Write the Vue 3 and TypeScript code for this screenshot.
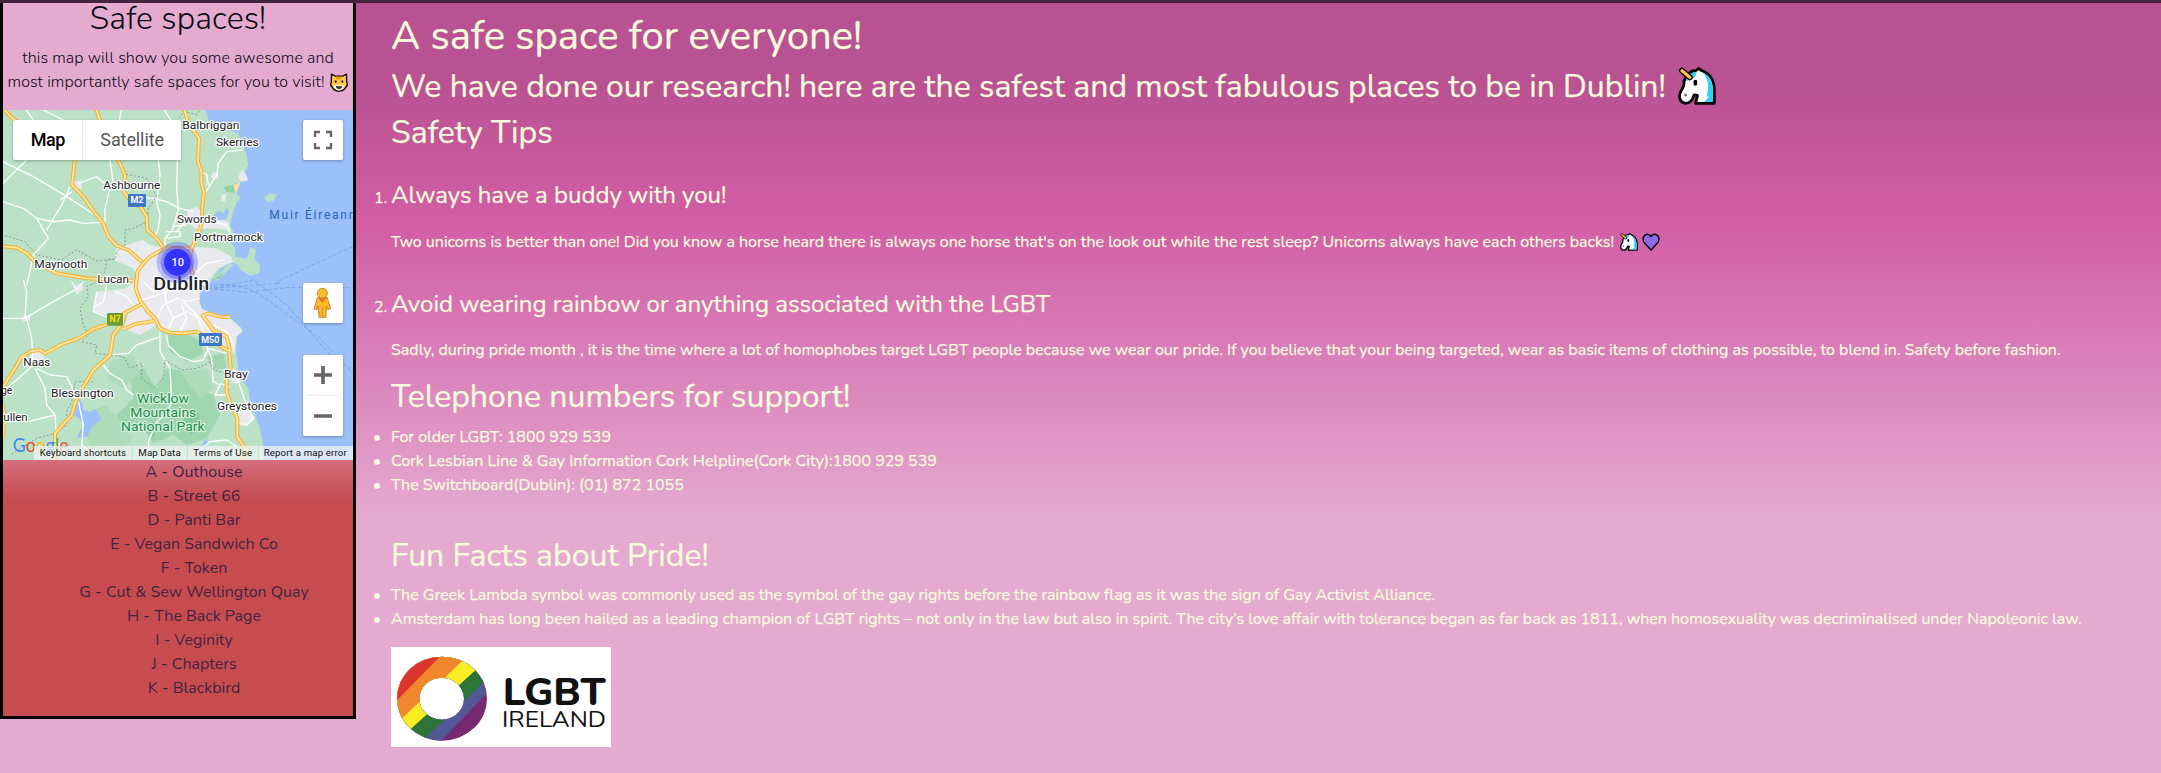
<script setup lang="ts">
interface Label { text: string; x: number; y: number; w: number }

const places: string[] = [
  'A - Outhouse',
  'B - Street 66',
  'D - Panti Bar',
  'E - Vegan Sandwich Co',
  'F - Token',
  'G - Cut & Sew Wellington Quay',
  'H - The Back Page',
  'I - Veginity',
  'J - Chapters',
  'K - Blackbird',
]

const phones: string[] = [
  'For older LGBT: 1800 929 539',
  'Cork Lesbian Line & Gay Information Cork Helpline(Cork City):1800 929 539',
  'The Switchboard(Dublin): (01) 872 1055',
]

const facts: string[] = [
  'The Greek Lambda symbol was commonly used as the symbol of the gay rights before the rainbow flag as it was the sign of Gay Activist Alliance.',
  'Amsterdam has long been hailed as a leading champion of LGBT rights – not only in the law but also in spirit. The city’s love affair with tolerance began as far back as 1811, when homosexuality was decriminalised under Napoleonic law.',
]

const towns: Label[] = [
  { text: 'Balbriggan', x: 547, y: 72, w: 171 },
  { text: 'Skerries', x: 648, y: 123, w: 128 },
  { text: 'Ashbourne', x: 310, y: 252, w: 171 },
  { text: 'Swords', x: 531, y: 354, w: 119 },
  { text: 'Portmarnock', x: 582, y: 408, w: 206 },
  { text: 'Maynooth', x: 103, y: 489, w: 159 },
  { text: 'Lucan', x: 292, y: 535, w: 95 },
  { text: 'Naas', x: 70, y: 783, w: 81 },
  { text: 'Bray', x: 672, y: 820, w: 71 },
  { text: 'Blessington', x: 153, y: 877, w: 188 },
  { text: 'Greystones', x: 651, y: 916, w: 180 },
  { text: 'ge', x: 3, y: 868, w: 34 },
  { text: 'ullen', x: 10, y: 949, w: 73 },
]

const motorways: string[] = [
  'M10 10 C30 38 50 50 62 57 L104 60 L150 60',
  'M288 10 L305 60 L355 165 L375 210 L372 262 L395 290 L425 310 L440 335 L442 375 L470 400 L492 430',
  'M228 60 L224 165 L216 240 L250 275 L285 325 L310 355 L325 395 L350 422 L385 435 L425 470',
  'M552 10 L565 55 L597 100 L594 170 L604 200 L604 235 L612 262 L606 310 L606 350 L596 385 L575 430',
  'M9 424 L50 428 L80 445 L110 475 L170 505 L260 520 L400 527',
  'M575 430 L495 430 L450 455 L430 475 L412 500 L407 550 L420 585 L440 615 L465 640 L480 670 L510 683 L550 685 L590 680 L630 700 L660 723 L688 738 L692 790 L680 825 L680 860 L690 895 L712 940 L712 995 L732 1025 L735 1065',
  'M575 430 L568 465 L578 510',
  'M9 845 L45 790 L65 755 L95 738 L120 735 L135 745 L185 718 L235 700 L280 672 L330 655 L370 650 L372 625 L425 597',
  'M9 900 L12 940 L9 1000',
  'M370 650 L340 690 L330 750 L280 795 L250 845 L225 895 L215 930 L165 985 L165 1065',
  'M370 672 L410 656 L462 648',
  'M690 737 L680 695 L640 675 L608 632 L625 625 L660 635 L690 636',
]

const minorRoads: string[] = [
  'M9 235 L80 165 M9 170 L100 215 L185 265 L285 330 M9 290 L70 310 L110 340 L145 400 L100 450 L90 500 L80 540 M110 340 L160 350 L210 345 L250 355 L310 352 M140 375 L185 300 L210 245',
  'M216 260 L180 285 M235 235 L290 215 L330 250 L315 310 L315 355 M330 165 L340 240 M475 165 L480 210 L470 290 L480 330 L475 370 L465 395 M535 60 L530 250 L535 310 L520 370 L495 400 L495 430',
  'M410 275 L460 280 L500 290 L540 310 L580 320 M500 380 L540 380 L540 395 L500 400 M515 365 L560 360 M615 265 L640 225 L650 210 L655 175 L680 140 L725 135 M600 195 L620 210 L625 240 M530 380 L560 345 L600 340 L680 360 L690 385',
  'M75 10 L100 45 M130 15 L190 45 M365 10 L355 60 M490 10 L515 50 M9 640 L75 640 L150 595 L225 555 M75 640 L80 560 L70 525 M80 640 L95 700 L100 780 L90 740 M100 780 L50 825 L20 850 M110 790 L150 810 L200 815 L215 845 L225 880 M105 790 L135 850 L140 900 L165 930 L85 950 M165 930 L170 1010 L215 1065',
  'M230 555 L215 530 M230 555 L250 530 M290 560 L280 620 L330 640 L370 650 M320 540 L310 590 L285 605 M345 560 L380 575 L400 600 M330 750 L385 745 L410 720 L480 695 M310 780 L330 805 L365 825 L380 855 L400 870 M480 680 L480 740 L510 790 L515 890 L500 925 L470 950 L445 1010 L450 1060 M500 690 L505 720 L540 755 L580 770 L610 765 L625 730 L680 745',
  'M610 700 L635 760 L640 830 L660 840 L645 870 L680 870 M660 835 L690 845 M700 790 L715 830 L740 900 L760 940 L740 960 L715 955 M600 1035 L630 1010 L680 1005 L710 1025 M235 890 L250 960 L245 1020 L300 1065',
  'M545 600 L560 640 L540 680 M470 640 L490 600 L530 580 L560 590 L600 580 M500 680 L520 640 L560 620 L600 640 L635 690 M420 585 L460 575 L500 560 L540 550 M490 540 L500 600 L520 640 M430 530 L460 560 M560 470 L590 500 L620 475 L670 465 M550 590 L590 630 L610 680 M580 500 L550 540 M490 450 L480 510 M640 660 L680 680 L700 720',
]
</script>

<template>
  <div class="page">
    <div class="topbar"></div>
    <div class="columns">
      <aside class="sidebar">
        <h2 class="side-title">Safe spaces!</h2>
        <p class="side-text">this map will show you some awesome and</p>
        <p class="side-text">
          <span>most importantly safe spaces for you to visit!</span>
          <svg class="cat" viewBox="0 0 18 19">
            <path d="M1.5 1 L5.5 3.2 H12.5 L16.5 1 L16.6 8 L17.4 12 L14 16.6 Q9 19.6 4 16.6 L.6 12 L1.4 8Z" fill="#ffc83d" stroke="#000" stroke-width="1.3" stroke-linejoin="round" />
            <path d="M6.5 2.9 L7.3 6 M9 2.9 V6.4 M11.5 2.9 L10.7 6" stroke="#d67d00" stroke-width="1" />
            <path d="M3 13.500 Q6 11.500 9 11.500 Q12 11.500 15 13.500 Q12 17.600 9 17.600 Q6 17.600 3 13.500Z" fill="#fff" />
            <circle cx="5.7" cy="8.6" r="1.1" />
            <circle cx="12.3" cy="8.6" r="1.1" />
            <path d="M6 12.800 Q9 13.800 12 12.800 Q11.800 16.200 9 16.200 Q6.200 16.200 6 12.800Z" fill="#222" />
            <path d="M7.300 15 Q9 13.800 10.700 15 Q9 16.600 7.300 15Z" fill="#f03a5f" />
          </svg>
        </p>

        <svg class="map" viewBox="9 15 1050 1050">
          <defs>
            <filter id="lift" x="-20%" y="-20%" width="140%" height="150%">
              <feDropShadow dx="0" dy="3" stdDeviation="4" flood-color="#000" flood-opacity=".3" />
            </filter>
          </defs>
          <rect x="9" y="15" width="1050" height="1050" fill="#9cc0f9" />
          <path fill="#bbe2c6" d="M0 0 H612 L625 45 L640 60 L715 85 L725 110 L740 150 L745 180 L735 200 L745 225 L720 232 L702 236 L707 262 L722 280 L710 292 L697 330 L690 360 L702 385 L692 410 L705 430 L706 455 L740 462 L752 427 L768 432 L764 462 L780 480 L778 505 L750 512 L722 495 L712 478 L695 470 L660 492 L625 540 L603 560 L598 580 L606 612 L650 628 L690 638 L725 670 L728 682 L712 692 L708 740 L715 790 L720 820 L745 850 L750 890 L765 930 L780 970 L788 1010 L790 1070 H0Z" />
          <path fill="#bbe2c6" d="M792 278 L812 264 L832 270 L820 288 L802 292Z M640 520 L690 475 L700 480 L650 528Z" />
          <path fill="#94d2a5" d="M500 690 Q560 675 600 710 L610 745 L560 770 L510 740Z M390 810 L430 790 L470 850 L500 790 L560 800 L590 850 L640 870 L660 930 L620 1000 L560 1020 L520 990 L460 1015 L420 960 L370 990 L350 930 L400 880Z M620 755 L670 745 L680 790 L640 795Z M290 960 L330 935 L350 990 L330 1030 L280 1010Z" opacity=".7" />
          <path fill="#aedcbb" d="M330 770 L400 750 L420 800 L370 850 L320 820Z M540 800 L620 790 L640 850 L600 880Z M240 930 L320 900 L400 1000 L330 1065 L270 1020Z" />
          <path fill="#6fc38b" d="M545 930 L590 920 L610 960 L570 990Z M430 960 L470 950 L460 1000Z M440 510 L480 495 L500 515 L470 530Z M670 245 L700 240 L705 262 L680 262Z M640 525 L670 498 L660 520Z" opacity=".55" />
          <path fill="#e8eaed" d="M350 430 L430 405 L450 420 L500 430 L570 425 L650 430 L690 452 L700 470 L655 490 L620 535 L600 560 L596 585 L605 612 L650 630 L690 640 L722 668 L725 680 L708 695 L704 745 L680 735 L640 705 L600 690 L510 685 L470 660 L420 690 L370 670 L385 625 L350 640 L280 620 L290 560 L380 550 L410 520 L400 490 L340 465Z" />
          <path fill="#e8eaed" d="M565 315 L590 305 L615 330 L685 350 L690 375 L640 370 L590 372 L555 350Z M715 215 L728 192 L745 225 L722 230Z M640 200 L655 205 L655 222 L632 218Z M665 270 L680 265 L675 290 L662 288Z M222 230 L245 225 L245 250 L230 252Z M220 545 L240 535 L252 550 L230 570Z M65 635 L90 630 L90 648 L70 650Z M95 740 L125 735 L135 760 L105 770Z M690 790 L720 800 L720 835 L695 835Z M715 920 L745 910 L765 940 L740 965 L715 950Z" />
          <path fill="#9cc0f9" d="M635 335 L655 318 L670 325 L682 308 L688 325 L675 345 L645 345Z M232 882 L245 890 L250 915 L270 920 L285 912 L305 940 L275 965 L262 995 L232 1000 L240 975 L255 962 L232 935 L205 925 L228 910Z M610 1010 L625 1000 L615 1040 L600 1045Z" />
          <path fill="#fbe29a" d="M700 240 L722 232 L714 250 L708 268Z" />
          <path v-for="(road, i) in minorRoads" :key="'s' + i" :d="road" fill="none" stroke="#fff" stroke-width="4" stroke-linejoin="round" />
          <path fill="none" stroke="#7d8c86" stroke-width="2.5" stroke-dasharray="6 6" d="M540 75 L535 45 L550 20 L590 28 L605 10 M355 165 L380 208 L440 220 L470 275 L445 310 L442 350 L400 370 L375 375 L375 420 L350 440 L345 462 L290 468 L230 435 L205 450 L185 465 L110 450 L75 410 L9 390 M345 462 L320 465 L310 520 L260 545 L265 575 L240 610 L250 660 L265 690 L245 710 L290 720 L285 745 L370 755 L390 790 L425 775 L425 820 L460 848 L490 820 L495 765 L545 795 L590 790 L630 772 L640 795 L680 805 M280 830 L225 830 L215 890 L200 920 L200 960 L165 985 L110 1000 L30 1050" />
          <path fill="none" stroke="#6f9fe8" stroke-width="2.5" stroke-dasharray="12 6" d="M606 548 L740 562 L860 548 L1059 548 M606 552 L700 545 L840 535 L830 530 L1059 424 M606 548 L660 545 L760 525 L860 600 L990 750 M606 545 Q720 520 810 590 L960 700 L1059 805" />
          <path v-for="(road, i) in motorways" :key="'c' + i" :d="road" fill="none" stroke="#f5b22e" stroke-width="12" stroke-linejoin="round" />
          <path v-for="(road, i) in motorways" :key="'i' + i" :d="road" fill="none" stroke="#fde5a6" stroke-width="5.500" stroke-linejoin="round" />

          <g class="halo" font-size="35">
            <text v-for="t in towns" :key="t.text" :x="t.x" :y="t.y" :textLength="t.w" lengthAdjust="spacingAndGlyphs">{{ t.text }}</text>
          </g>
          <g class="halo park" font-size="38">
            <text x="411" y="893" textLength="156" lengthAdjust="spacingAndGlyphs">Wicklow</text>
            <text x="391" y="935" textLength="198" lengthAdjust="spacingAndGlyphs">Mountains</text>
            <text x="363" y="977" textLength="251" lengthAdjust="spacingAndGlyphs">National Park</text>
          </g>
          <text class="sea" x="808" y="342" font-size="36" textLength="258">Muir Éireann</text>

          <rect x="384" y="267" width="54" height="39" rx="4" fill="#3d78c7" />
          <text class="shield" x="411" y="295" font-size="27">M2</text>
          <rect x="321" y="624" width="48" height="38" rx="4" fill="#6a9a3b" />
          <text class="shield n7" x="345" y="652" font-size="27">N7</text>
          <rect x="597" y="684" width="69" height="39" rx="4" fill="#3d78c7" />
          <text class="shield" x="631" y="713" font-size="27">M50</text>

          <text class="halo city" x="460" y="555" font-size="54" textLength="168" lengthAdjust="spacingAndGlyphs">Dublin</text>
          <circle cx="532" cy="472" r="62" fill="#3332ff" opacity=".28" />
          <circle cx="532" cy="472" r="50" fill="#3332ff" opacity=".4" />
          <circle cx="532" cy="472" r="40" fill="#3332ff" />
          <text class="count" x="533" y="483" font-size="33">10</text>

          <g filter="url(#lift)">
            <rect x="39" y="45" width="504" height="120" rx="6" fill="#fff" />
            <rect x="909" y="45" width="120" height="120" rx="6" fill="#fff" />
            <rect x="909" y="534" width="120" height="120" rx="6" fill="#fff" />
            <rect x="909" y="750" width="120" height="243" rx="6" fill="#fff" />
          </g>
          <path d="M248 45 V165" stroke="#e6e6e6" stroke-width="3" />
          <text class="tab on" x="92" y="123" font-size="54" textLength="104">Map</text>
          <text class="tab" x="301" y="123" font-size="54" textLength="191">Satellite</text>
          <path d="M945 96 V81 H960 M978 81 H993 V96 M993 114 V129 H978 M960 129 H945 V114" fill="none" stroke="#666" stroke-width="7" />
          <path d="M942 810 H996 M969 783 V837 M942 933 H996" stroke="#666" stroke-width="11" />
          <path d="M924 871 H1014" stroke="#e6e6e6" stroke-width="3" />
          <path d="M952 578 Q967 572 982 578 L992 612 L983 614 L979 603 L978 637 H957 L955 603 L951 614 L942 612Z" fill="#fbb829" stroke="#b87b1c" stroke-width="2.5" />
          <path d="M954 577 H981 L967 594Z" fill="#e5762c" />
          <path d="M967 606 V637" stroke="#b87b1c" stroke-width="2" />
          <circle cx="967" cy="565" r="15" fill="#fbbc2d" stroke="#b87b1c" stroke-width="2.5" />

          <text class="logo" x="38" y="1040" font-size="56" textLength="168" lengthAdjust="spacingAndGlyphs"><tspan fill="#4285f4">G</tspan><tspan fill="#ea4335">o</tspan><tspan fill="#fbbc04">o</tspan><tspan fill="#4285f4">g</tspan><tspan fill="#34a853">l</tspan><tspan fill="#ea4335">e</tspan></text>
          <rect x="102" y="1023" width="957" height="42" fill="#f5f5f5" opacity=".7" />
          <path d="M397 1023 V1065 M562 1023 V1065 M775 1023 V1065" stroke="#bbe2c6" stroke-width="3" />
          <g class="legal" font-size="29">
            <text x="119" y="1053" textLength="259">Keyboard shortcuts</text>
            <text x="415" y="1053" textLength="127">Map Data</text>
            <text x="580" y="1053" textLength="176">Terms of Use</text>
            <text x="791" y="1053" textLength="249">Report a map error</text>
          </g>
        </svg>

        <div class="places">
          <ul>
            <li v-for="p in places" :key="p">{{ p }}</li>
          </ul>
        </div>
      </aside>

      <main class="content">
        <svg class="defs" width="0" height="0">
          <symbol id="unicorn" viewBox="0 0 38 38">
            <path d="M8 10 L10.500 6.500 Q14 3.500 18 3.500 L20.500 1.500 L24 3.800 Q36.300 8 36.300 24 V36.300 H17.500 L19.500 28.500 L16 28 Q14 36.300 7.500 36.300 Q1.500 35.500 1.500 29 Q2 25 4.500 21.500 Q6.500 18 6 14Z" fill="#fff" stroke="#000" stroke-width="2.800" stroke-linejoin="round" />
            <path d="M24.500 5.300 Q35 10 35 24 V35 H26.500 L31 29.500 L28.500 29.500 Q31 21 29.500 15 Q28 9 24.500 5.300Z" fill="#32cfff" />
            <path d="M8 14.500 Q9 6.500 18.500 4.800 Q19 10.500 13 12 Q10 12.500 8 14.500Z" fill="#32cfff" />
            <path d="M3.800 3.500 L12 10.500" stroke="#000" stroke-width="5.600" stroke-linecap="round" />
            <path d="M4 3.700 L11.800 10.300" stroke="#ffc83d" stroke-width="3.200" stroke-linecap="round" />
            <rect x="15.600" y="12.800" width="3.600" height="6" rx="1.800" />
            <circle cx="7.500" cy="28" r="1.500" fill="#777" />
          </symbol>
        </svg>
        <h1>A safe space for everyone!</h1>
        <h2 class="lead">
          <span>We have done our research! here are the safest and most fabulous places to be in Dublin!</span>
          <svg class="uni-big"><use href="#unicorn" /></svg>
        </h2>
        <h2 class="tips">Safety Tips</h2>

        <ol>
          <li>
            <h3><b class="num">1.</b><span>Always have a buddy with you!</span></h3>
            <p>
              <span>Two unicorns is better than one! Did you know a horse heard there is always one horse that's on the look out while the rest sleep? Unicorns always have each others backs!</span>
              <svg class="uni-small"><use href="#unicorn" /></svg>
              <svg class="heart" viewBox="0 0 18 18">
                <path d="M9 17 L2 9.5 Q-.3 5 3 2 Q6.500 0 9 3.500 Q11.500 0 15 2 Q18.300 5 16 9.500Z" fill="#8b6be8" stroke="#000" stroke-width="1.300" stroke-linejoin="round" />
              </svg>
            </p>
          </li>
          <li>
            <h3><b class="num">2.</b><span>Avoid wearing rainbow or anything associated with the LGBT</span></h3>
            <p class="second"><span>Sadly, during pride month , it is the time where a lot of homophobes target LGBT people because we wear our pride. If you believe that your being targeted, wear as basic items of clothing as possible, to blend in. Safety before fashion.</span></p>
          </li>
        </ol>

        <h2 class="phones-title">Telephone numbers for support!</h2>
        <ul class="dots">
          <li v-for="p in phones" :key="p">{{ p }}</li>
        </ul>

        <h2 class="facts-title">Fun Facts about Pride!</h2>
        <ul class="dots">
          <li v-for="f in facts" :key="f">{{ f }}</li>
        </ul>

        <svg class="badge" viewBox="0 0 660 300">
          <defs>
            <clipPath id="ring">
              <path clip-rule="evenodd" d="M18 155 A135 126 0 1 0 288 155 A135 126 0 1 0 18 155Z M85 155 A67 63 0 1 1 219 155 A67 63 0 1 1 85 155Z" />
            </clipPath>
          </defs>
          <rect width="660" height="300" fill="#fff" />
          <g clip-path="url(#ring)">
            <rect width="300" height="300" fill="#772a71" />
            <path d="M0 0 H420 L145 288 L0 420Z" fill="#545796" />
            <path d="M0 0 H390 L100 275 L0 360Z" fill="#2d7439" />
            <path d="M0 0 H330 L60 245 L0 298Z" fill="#f9ed25" />
            <path d="M0 0 H258 L32 215 L0 240Z" fill="#f1872d" />
            <path d="M0 0 H175 L18 160 L0 178Z" fill="#dc352b" />
          </g>
          <g fill="#111">
            <text class="lgbt" x="335" y="173" font-size="114" textLength="309" lengthAdjust="spacingAndGlyphs">LGBT</text>
            <text class="ireland" x="333" y="239" font-size="68" textLength="312" lengthAdjust="spacingAndGlyphs">IRELAND</text>
          </g>
        </svg>
      </main>
    </div>
  </div>
</template>

<style>
body { margin: 0; }
</style>

<style scoped>
.page {
  height: 773px;
  overflow: hidden;
  font-family: Nunito, Lato, "Open Sans", sans-serif;
  font-size: 16px;
  line-height: 24px;
  color: #f8fbdc;
  white-space: nowrap;
  background: linear-gradient(#b95292 0, #b95292 82px, #d25ea5 222px, #d97fb9 355px, #e5aad0 518px, #e5aad0 100%);
}
h1, h2, h3, p, ul, ol { margin: 0; padding: 0; font-weight: 400; }
ul, ol { list-style: none; }
.topbar { height: 3px; background: #43233f; }
.columns { display: flex; align-items: flex-start; }
.sidebar {
  box-sizing: border-box;
  width: 356px;
  height: 716px;
  flex: none;
  border: solid #000;
  border-width: 0 3px 3px;
  background: #e5aad0;
  color: #0a0a12;
  display: flex;
  flex-direction: column;
  font-weight: 300;
}
.side-title { font-weight: 300; font-size: 32px; line-height: 38px; letter-spacing: .15px; margin: -3px 0 8px; text-align: center; }
.side-text { font-weight: 300; height: 24px; letter-spacing: .08px; display: flex; justify-content: center; align-items: center; gap: 6px; }
.cat { width: 18px; height: 19px; flex: none; }
.map { display: block; width: 350px; height: 350px; margin-top: 16px; font-family: Roboto, sans-serif; }
.halo { fill: #202124; stroke: #fff; stroke-width: 7; stroke-linejoin: round; paint-order: stroke; font-weight: 400; }
.park { fill: #1e8e4e; stroke: #d6f0dc; }
.city { font-weight: 500; }
.sea { fill: #2463c0; font-weight: 400; }
.shield { fill: #fff; font-weight: 700; text-anchor: middle; }
.n7 { fill: #ffe100; }
.count { fill: #fff; font-weight: 500; text-anchor: middle; }
.tab { fill: #565656; font-weight: 400; }
.on { fill: #000; font-weight: 500; }
.logo { font-family: Lato, sans-serif; font-weight: 400; }
.legal { fill: #111; font-weight: 400; }
.places {
  flex: 1;
  display: flex;
  justify-content: center;
  padding-left: 32px;
  color: #42233f;
  background: linear-gradient(#d36e7d 0, #c74c50 40px);
}
.places ul { text-align: center; }
.content { padding: 9px 0 0 35px; -webkit-text-stroke: .25px currentColor; }
.badge { -webkit-text-stroke: 0; }
.defs { position: absolute; }
h1 { font-size: 40px; line-height: 48px; }
.content h2 { font-size: 32px; line-height: 38px; }
h3 { font-size: 24px; line-height: 29px; height: 29px; display: flex; align-items: baseline; margin-left: -17px; }
.num { width: 17px; font-size: 16px; line-height: 16px; font-weight: 400; }
.content .lead { margin-top: 8px; display: flex; align-items: center; gap: 12px; }
.uni-big { width: 38px; height: 38px; flex: none; margin-top: -2px; }
.tips { margin-top: 8px; }
.content p { display: flex; align-items: center; height: 24px; margin-top: 20px; }
.content .second { margin-top: 19px; }
.uni-small { width: 18px; height: 18px; flex: none; margin-left: 6px; }
.heart { width: 18px; height: 18px; flex: none; margin-left: 4px; }
ol { margin-top: 29px; }
ol li + li { margin-top: 36px; }
.phones-title { margin: 16px 0 9px; }
.facts-title { margin: 40px 0 8px; }
.dots li { display: flex; align-items: center; margin-left: -17px; }
.dots li::before { content: ""; width: 6px; height: 6px; border-radius: 50%; background: currentColor; margin: 1px 11px 0 0; flex: none; }
.badge { display: block; width: 220px; height: 100px; margin-top: 16px; }
.lgbt { font-weight: 800; }
.ireland { font-weight: 400; }
</style>
